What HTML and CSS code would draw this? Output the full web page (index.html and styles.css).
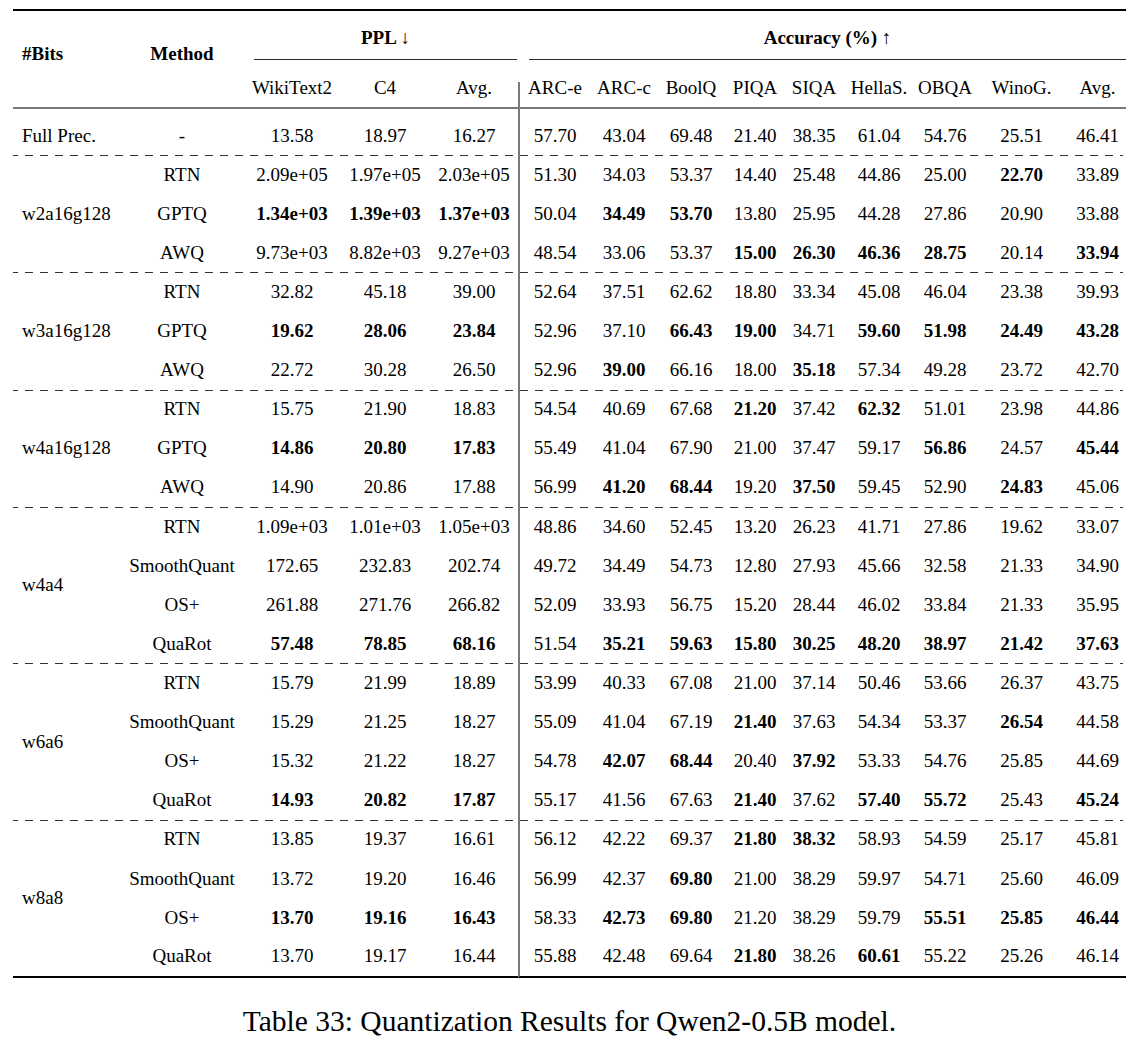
FILE: index.html
```html
<!DOCTYPE html>
<html lang="en">
<head>
<meta charset="utf-8">
<title>Table 33: Quantization Results for Qwen2-0.5B model.</title>
<link rel="stylesheet" href="styles.css">
</head>
<body>
<div class="page">
<table class="results">
  <colgroup>
    <col class="c-bits"><col class="c-method"><col class="c-wiki"><col class="c-c4"><col class="c-pavg">
    <col class="c-arce"><col class="c-arcc"><col class="c-boolq"><col class="c-piqa"><col class="c-siqa">
    <col class="c-hella"><col class="c-obqa"><col class="c-wino"><col class="c-aavg">
  </colgroup>
  <thead>
    <tr class="hrow-a">
      <th rowspan="2" class="h-label h-bits">#Bits</th>
      <th rowspan="2" class="h-label">Method</th>
      <th colspan="3" class="h-group"><div class="cmid cmid-ppl">PPL <span class="arrow">↓</span></div></th>
      <th colspan="9" class="h-group"><div class="cmid cmid-acc">Accuracy (%) <span class="arrow">↑</span></div></th>
    </tr>
    <tr class="hrow-b">
      <th>WikiText2</th><th>C4</th><th>Avg.</th>
      <th class="vl">ARC-e</th><th>ARC-c</th><th>BoolQ</th><th>PIQA</th><th>SIQA</th><th>HellaS.</th><th>OBQA</th><th>WinoG.</th><th>Avg.</th>
    </tr>
  </thead>
  <tbody>
    <tr class="first">
      <td class="bits">Full Prec.</td><td>-</td>
      <td>13.58</td><td>18.97</td><td>16.27</td>
      <td class="vl">57.70</td><td>43.04</td><td>69.48</td><td>21.40</td><td>38.35</td><td>61.04</td><td>54.76</td><td>25.51</td><td>46.41</td>
    </tr>

    <tr class="gs">
      <td rowspan="3" class="bits">w2a16g128</td><td>RTN</td>
      <td>2.09e+05</td><td>1.97e+05</td><td>2.03e+05</td>
      <td class="vl">51.30</td><td>34.03</td><td>53.37</td><td>14.40</td><td>25.48</td><td>44.86</td><td>25.00</td><td class="b">22.70</td><td>33.89</td>
    </tr>
    <tr>
      <td>GPTQ</td>
      <td class="b">1.34e+03</td><td class="b">1.39e+03</td><td class="b">1.37e+03</td>
      <td class="vl">50.04</td><td class="b">34.49</td><td class="b">53.70</td><td>13.80</td><td>25.95</td><td>44.28</td><td>27.86</td><td>20.90</td><td>33.88</td>
    </tr>
    <tr>
      <td>AWQ</td>
      <td>9.73e+03</td><td>8.82e+03</td><td>9.27e+03</td>
      <td class="vl">48.54</td><td>33.06</td><td>53.37</td><td class="b">15.00</td><td class="b">26.30</td><td class="b">46.36</td><td class="b">28.75</td><td>20.14</td><td class="b">33.94</td>
    </tr>

    <tr class="gs">
      <td rowspan="3" class="bits">w3a16g128</td><td>RTN</td>
      <td>32.82</td><td>45.18</td><td>39.00</td>
      <td class="vl">52.64</td><td>37.51</td><td>62.62</td><td>18.80</td><td>33.34</td><td>45.08</td><td>46.04</td><td>23.38</td><td>39.93</td>
    </tr>
    <tr>
      <td>GPTQ</td>
      <td class="b">19.62</td><td class="b">28.06</td><td class="b">23.84</td>
      <td class="vl">52.96</td><td>37.10</td><td class="b">66.43</td><td class="b">19.00</td><td>34.71</td><td class="b">59.60</td><td class="b">51.98</td><td class="b">24.49</td><td class="b">43.28</td>
    </tr>
    <tr>
      <td>AWQ</td>
      <td>22.72</td><td>30.28</td><td>26.50</td>
      <td class="vl">52.96</td><td class="b">39.00</td><td>66.16</td><td>18.00</td><td class="b">35.18</td><td>57.34</td><td>49.28</td><td>23.72</td><td>42.70</td>
    </tr>

    <tr class="gs">
      <td rowspan="3" class="bits">w4a16g128</td><td>RTN</td>
      <td>15.75</td><td>21.90</td><td>18.83</td>
      <td class="vl">54.54</td><td>40.69</td><td>67.68</td><td class="b">21.20</td><td>37.42</td><td class="b">62.32</td><td>51.01</td><td>23.98</td><td>44.86</td>
    </tr>
    <tr>
      <td>GPTQ</td>
      <td class="b">14.86</td><td class="b">20.80</td><td class="b">17.83</td>
      <td class="vl">55.49</td><td>41.04</td><td>67.90</td><td>21.00</td><td>37.47</td><td>59.17</td><td class="b">56.86</td><td>24.57</td><td class="b">45.44</td>
    </tr>
    <tr>
      <td>AWQ</td>
      <td>14.90</td><td>20.86</td><td>17.88</td>
      <td class="vl">56.99</td><td class="b">41.20</td><td class="b">68.44</td><td>19.20</td><td class="b">37.50</td><td>59.45</td><td>52.90</td><td class="b">24.83</td><td>45.06</td>
    </tr>

    <tr class="gs">
      <td rowspan="4" class="bits">w4a4</td><td>RTN</td>
      <td>1.09e+03</td><td>1.01e+03</td><td>1.05e+03</td>
      <td class="vl">48.86</td><td>34.60</td><td>52.45</td><td>13.20</td><td>26.23</td><td>41.71</td><td>27.86</td><td>19.62</td><td>33.07</td>
    </tr>
    <tr>
      <td>SmoothQuant</td>
      <td>172.65</td><td>232.83</td><td>202.74</td>
      <td class="vl">49.72</td><td>34.49</td><td>54.73</td><td>12.80</td><td>27.93</td><td>45.66</td><td>32.58</td><td>21.33</td><td>34.90</td>
    </tr>
    <tr>
      <td>OS+</td>
      <td>261.88</td><td>271.76</td><td>266.82</td>
      <td class="vl">52.09</td><td>33.93</td><td>56.75</td><td>15.20</td><td>28.44</td><td>46.02</td><td>33.84</td><td>21.33</td><td>35.95</td>
    </tr>
    <tr>
      <td>QuaRot</td>
      <td class="b">57.48</td><td class="b">78.85</td><td class="b">68.16</td>
      <td class="vl">51.54</td><td class="b">35.21</td><td class="b">59.63</td><td class="b">15.80</td><td class="b">30.25</td><td class="b">48.20</td><td class="b">38.97</td><td class="b">21.42</td><td class="b">37.63</td>
    </tr>

    <tr class="gs">
      <td rowspan="4" class="bits">w6a6</td><td>RTN</td>
      <td>15.79</td><td>21.99</td><td>18.89</td>
      <td class="vl">53.99</td><td>40.33</td><td>67.08</td><td>21.00</td><td>37.14</td><td>50.46</td><td>53.66</td><td>26.37</td><td>43.75</td>
    </tr>
    <tr>
      <td>SmoothQuant</td>
      <td>15.29</td><td>21.25</td><td>18.27</td>
      <td class="vl">55.09</td><td>41.04</td><td>67.19</td><td class="b">21.40</td><td>37.63</td><td>54.34</td><td>53.37</td><td class="b">26.54</td><td>44.58</td>
    </tr>
    <tr>
      <td>OS+</td>
      <td>15.32</td><td>21.22</td><td>18.27</td>
      <td class="vl">54.78</td><td class="b">42.07</td><td class="b">68.44</td><td>20.40</td><td class="b">37.92</td><td>53.33</td><td>54.76</td><td>25.85</td><td>44.69</td>
    </tr>
    <tr>
      <td>QuaRot</td>
      <td class="b">14.93</td><td class="b">20.82</td><td class="b">17.87</td>
      <td class="vl">55.17</td><td>41.56</td><td>67.63</td><td class="b">21.40</td><td>37.62</td><td class="b">57.40</td><td class="b">55.72</td><td>25.43</td><td class="b">45.24</td>
    </tr>

    <tr class="gs">
      <td rowspan="4" class="bits end">w8a8</td><td>RTN</td>
      <td>13.85</td><td>19.37</td><td>16.61</td>
      <td class="vl">56.12</td><td>42.22</td><td>69.37</td><td class="b">21.80</td><td class="b">38.32</td><td>58.93</td><td>54.59</td><td>25.17</td><td>45.81</td>
    </tr>
    <tr>
      <td>SmoothQuant</td>
      <td>13.72</td><td>19.20</td><td>16.46</td>
      <td class="vl">56.99</td><td>42.37</td><td class="b">69.80</td><td>21.00</td><td>38.29</td><td>59.97</td><td>54.71</td><td>25.60</td><td>46.09</td>
    </tr>
    <tr>
      <td>OS+</td>
      <td class="b">13.70</td><td class="b">19.16</td><td class="b">16.43</td>
      <td class="vl">58.33</td><td class="b">42.73</td><td class="b">69.80</td><td>21.20</td><td>38.29</td><td>59.79</td><td class="b">55.51</td><td class="b">25.85</td><td class="b">46.44</td>
    </tr>
    <tr class="last">
      <td>QuaRot</td>
      <td>13.70</td><td>19.17</td><td>16.44</td>
      <td class="vl">55.88</td><td>42.48</td><td>69.64</td><td class="b">21.80</td><td>38.26</td><td class="b">60.61</td><td>55.22</td><td>25.26</td><td>46.14</td>
    </tr>
  </tbody>
</table>
<p class="caption">Table 33: Quantization Results for Qwen2-0.5B model.</p>
</div>
</body>
</html>
```

FILE: styles.css
```css
html, body {
  margin: 0;
  padding: 0;
  background: #ffffff;
}

body {
  font-family: "Liberation Serif", "Times New Roman", serif;
  color: #000000;
}

.page {
  width: 1139px;
  padding-top: 9px;
}

.results {
  margin-left: 13px;
  width: 1113px;
  table-layout: fixed;
  border-collapse: separate;
  border-spacing: 0;
  font-size: 19px;
}

.c-bits { width: 107px; }
.c-method { width: 124px; }
.c-wiki { width: 96px; }
.c-c4 { width: 90px; }
.c-pavg { width: 88px; }
.c-arce { width: 72px; }
.c-arcc { width: 68px; }
.c-boolq { width: 66px; }
.c-piqa { width: 62px; }
.c-siqa { width: 56px; }
.c-hella { width: 74px; }
.c-obqa { width: 58px; }
.c-wino { width: 95px; }
.c-aavg { width: 57px; }

.results th,
.results td {
  padding: 0;
  text-align: center;
  white-space: nowrap;
  font-weight: 400;
}

/* header */
.hrow-a th {
  border-top: 2px solid #000000;
}

.h-label {
  vertical-align: top;
  font-weight: 700 !important;
  line-height: 24px;
  padding-top: 31px !important;
  border-bottom: 2px solid #7a7a7a;
}

.h-bits {
  text-align: left !important;
  padding-left: 9px !important;
}

.h-group {
  vertical-align: top;
  padding: 15px 0 22px 0 !important;
  font-weight: 700 !important;
}

.cmid {
  line-height: 24px;
  padding-bottom: 9px;
  border-bottom: 1px solid #2a2a2a;
}

.cmid-ppl {
  margin-left: 10px;
  margin-right: 1px;
}

.cmid-acc {
  margin-left: 11px;
}

.arrow {
  font-weight: 400;
}

.hrow-b th {
  line-height: 11px;
  padding-bottom: 14px;
  vertical-align: top;
  border-bottom: 2px solid #7a7a7a;
}

/* body */
.results tbody tr {
  height: 39.12px;
}

.results tbody td {
  vertical-align: middle;
  line-height: 24px;
}

.results tbody tr.first {
  height: 46px;
}

.results tbody tr.first td {
  padding-top: 8px;
}

.results tbody tr.last {
  height: 41px;
}

.results tbody tr.last td {
  padding-bottom: 2px;
}

.results td.bits {
  text-align: left;
  padding-left: 9px;
}

.results .vl {
  border-left: 2px solid #7a7a7a;
}

.results td.b {
  font-weight: 700;
}

.results tbody tr.gs {
  background-image: repeating-linear-gradient(to right, #333333 0, #333333 8px, transparent 8px, transparent 15px);
  background-size: 100% 1px;
  background-repeat: no-repeat;
  background-position: -3px 0;
}

.results tbody tr.last td,
.results td.bits.end {
  border-bottom: 2px solid #000000;
}

.caption {
  margin: 25px 0 0 0;
  font-size: 29.5px;
  line-height: 36px;
  text-align: center;
}
```
